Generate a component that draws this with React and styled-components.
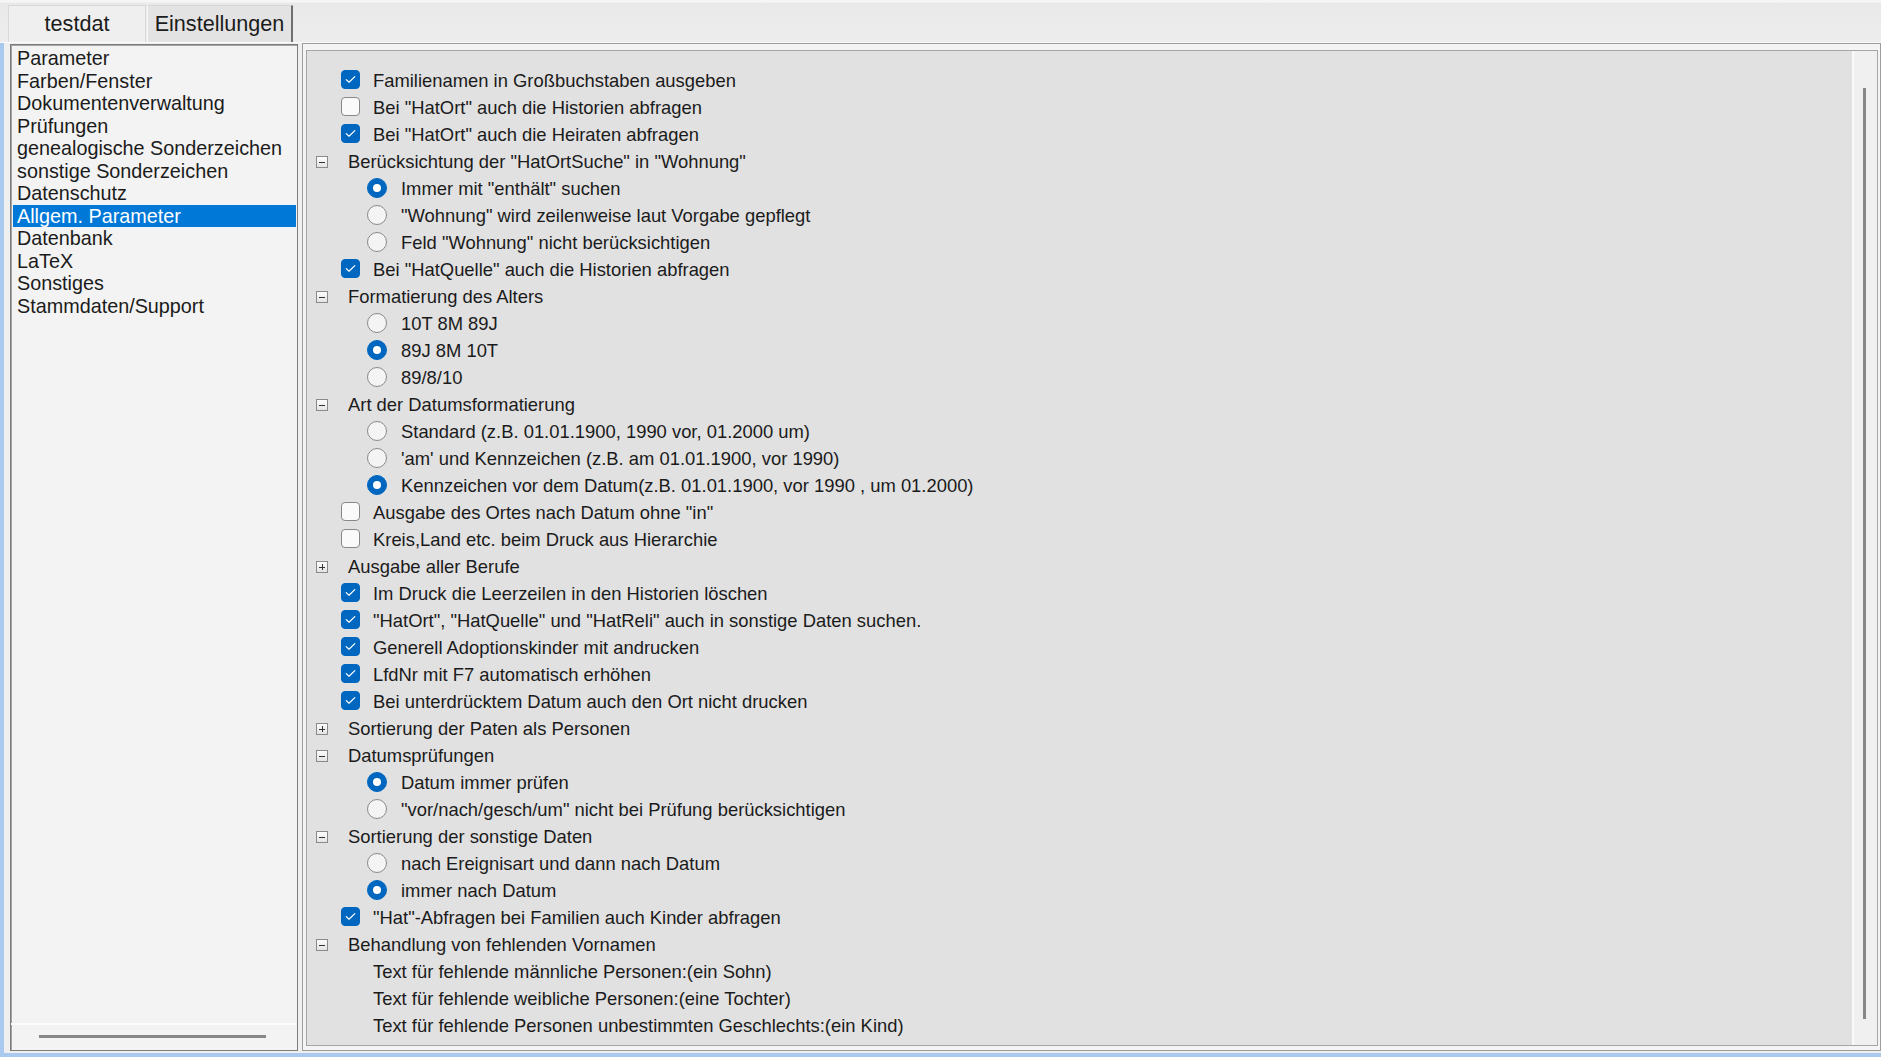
import React from 'react'
import styled, { createGlobalStyle } from 'styled-components'

const GlobalStyle = createGlobalStyle`
  html, body {
    margin: 0;
    padding: 0;
    background: #eeeeee;
    overflow: hidden;
  }
  * { box-sizing: border-box; }
`

const Window = styled.div`
  width: 1881px;
  height: 1057px;
  display: flex;
  flex-direction: column;
  background: #efefef;
  font-family: "Liberation Sans", Arial, sans-serif;
  color: #1b1b1b;
  border-bottom: 4px solid #a9c9ee;
`

const TabStrip = styled.div`
  height: 43px;
  flex: none;
  display: flex;
  align-items: flex-end;
  padding: 0 0 0 8px;
  background: linear-gradient(#f6f6f6 0, #f6f6f6 2px, #e9e9e9 3px, #ededed 100%);
  border-bottom: 1px solid #fafafa;
`

const Tab = styled.div`
  height: 37px;
  width: ${p => p.w}px;
  display: flex;
  align-items: center;
  justify-content: center;
  font-size: 21.6px;
  background: ${p => (p.active ? '#e3e3e3' : '#efefef')};
  border-top: 1px solid #d6d6d6;
  border-left: 1px solid ${p => (p.active ? '#f8f8f8' : '#d9d9d9')};
  border-right: ${p => (p.active ? '2px solid #6f6f6f' : '1px solid #d9d9d9')};
  margin-right: 1px;
`

const Main = styled.div`
  flex: 1;
  display: flex;
  border-left: 4px solid #a9c9ee;
  padding: 0 0 2px 6px;
  min-height: 0;
`

const ListPanel = styled.div`
  width: 288px;
  margin-top: 1px;
  display: flex;
  flex-direction: column;
  background: #f3f3f3;
  border: 1px solid #7c7c7c;
  box-shadow: inset 1px 1px 0 #a4a4a4;
`

const ListItems = styled.div`
  flex: 1;
  padding: 2px 1px 0 2px;
`

const ListItem = styled.div`
  height: 22.5px;
  line-height: 22.5px;
  font-size: 19.8px;
  padding-left: 4px;
  white-space: nowrap;
  background: ${p => (p.selected ? '#0078d7' : 'transparent')};
  color: ${p => (p.selected ? '#ffffff' : '#1b1b1b')};
`

const HScroll = styled.div`
  height: 27px;
  flex: none;
  border-top: 2px solid #fbfbfb;
  padding: 10px 0 0 28px;
`

const HThumb = styled.div`
  width: 227px;
  height: 3px;
  background: #878787;
`

const RightPanel = styled.div`
  flex: 1;
  margin-left: 4px;
  display: flex;
  border: 1px solid #9d9d9d;
  padding: 6px 2px 4px 3px;
  background: #f4f4f4;
`

const TreeBox = styled.div`
  flex: 1;
  display: flex;
  border: 1px solid #a6a6a6;
  background: #e1e1e1;
  min-width: 0;
`

const Tree = styled.div`
  flex: 1;
  padding-top: 16px;
  overflow: hidden;
`

const VScroll = styled.div`
  width: 25px;
  flex: none;
  background: #f0f0f0;
  border-left: 2px solid #fafafa;
  padding: 37px 0 26px 9px;
`

const VThumb = styled.div`
  width: 3px;
  height: 100%;
  background: #878787;
`

const indent = { group: 9, check: 34, radio: 60, text: 66 }
const gap = { group: 20, check: 13, radio: 14, text: 0 }

const Row = styled.div`
  height: 27px;
  display: flex;
  align-items: center;
  padding-left: ${p => indent[p.kind]}px;
  gap: ${p => gap[p.kind]}px;
  font-size: 18.4px;
  white-space: nowrap;
`

const Expander = styled.div`
  width: 12px;
  height: 12px;
  flex: none;
  border: 1px solid #8a8a8a;
  background: linear-gradient(#fdfdfd, #e4e4e4);
  position: relative;
  margin-top: 1px;
  &::before {
    content: '';
    position: absolute;
    left: 2px;
    top: 4.5px;
    width: 6px;
    height: 1px;
    background: #333333;
  }
  &::after {
    content: '';
    position: absolute;
    left: 4.5px;
    top: 2px;
    width: 1px;
    height: 6px;
    background: #333333;
    display: ${p => (p.open ? 'none' : 'block')};
  }
`

const Box = styled.div`
  width: 19px;
  height: 19px;
  flex: none;
  border-radius: 4px;
  display: flex;
  align-items: center;
  justify-content: center;
  background: ${p => (p.on ? '#0067c0' : '#fafafa')};
  border: 1px solid ${p => (p.on ? '#0067c0' : '#878787')};
  margin-top: -2px;
`

const Radio = styled.div`
  width: 20px;
  height: 20px;
  flex: none;
  border-radius: 50%;
  display: flex;
  align-items: center;
  justify-content: center;
  background: ${p => (p.on ? '#0067c0' : '#f4f4f4')};
  border: 1px solid ${p => (p.on ? '#0067c0' : '#8a8a8a')};
  margin-top: -2px;
  &::after {
    content: '';
    width: 8px;
    height: 8px;
    border-radius: 50%;
    background: #ffffff;
    display: ${p => (p.on ? 'block' : 'none')};
  }
`

const Label = styled.span`
  line-height: 27px;
`

const Check = () => (
  <svg width="11" height="9" viewBox="0 0 11 9">
    <path d="M1.2 4.6 L4 7.2 L9.8 1.6" fill="none" stroke="#ffffff" strokeWidth="1.2" strokeLinecap="round" strokeLinejoin="round" />
  </svg>
)

const categories = [
  'Parameter',
  'Farben/Fenster',
  'Dokumentenverwaltung',
  'Prüfungen',
  'genealogische Sonderzeichen',
  'sonstige Sonderzeichen',
  'Datenschutz',
  'Allgem. Parameter',
  'Datenbank',
  'LaTeX',
  'Sonstiges',
  'Stammdaten/Support'
]

const rows = [
  { kind: 'check', on: true, label: 'Familienamen in Großbuchstaben ausgeben' },
  { kind: 'check', on: false, label: 'Bei "HatOrt" auch die Historien abfragen' },
  { kind: 'check', on: true, label: 'Bei "HatOrt" auch die Heiraten abfragen' },
  { kind: 'group', on: true, label: 'Berücksichtung der "HatOrtSuche" in "Wohnung"' },
  { kind: 'radio', on: true, label: 'Immer mit "enthält" suchen' },
  { kind: 'radio', on: false, label: '"Wohnung" wird zeilenweise laut Vorgabe gepflegt' },
  { kind: 'radio', on: false, label: 'Feld "Wohnung" nicht berücksichtigen' },
  { kind: 'check', on: true, label: 'Bei "HatQuelle" auch die Historien abfragen' },
  { kind: 'group', on: true, label: 'Formatierung des Alters' },
  { kind: 'radio', on: false, label: '10T 8M 89J' },
  { kind: 'radio', on: true, label: '89J 8M 10T' },
  { kind: 'radio', on: false, label: '89/8/10' },
  { kind: 'group', on: true, label: 'Art der Datumsformatierung' },
  { kind: 'radio', on: false, label: 'Standard (z.B. 01.01.1900, 1990 vor, 01.2000 um)' },
  { kind: 'radio', on: false, label: "'am' und Kennzeichen (z.B. am 01.01.1900, vor 1990)" },
  { kind: 'radio', on: true, label: 'Kennzeichen vor dem Datum(z.B. 01.01.1900, vor 1990 , um 01.2000)' },
  { kind: 'check', on: false, label: 'Ausgabe des Ortes nach Datum ohne "in"' },
  { kind: 'check', on: false, label: 'Kreis,Land etc. beim Druck aus Hierarchie' },
  { kind: 'group', on: false, label: 'Ausgabe aller Berufe' },
  { kind: 'check', on: true, label: 'Im Druck die Leerzeilen in den Historien löschen' },
  { kind: 'check', on: true, label: '"HatOrt", "HatQuelle" und "HatReli" auch in sonstige Daten suchen.' },
  { kind: 'check', on: true, label: 'Generell Adoptionskinder mit andrucken' },
  { kind: 'check', on: true, label: 'LfdNr mit F7 automatisch erhöhen' },
  { kind: 'check', on: true, label: 'Bei unterdrücktem Datum auch den Ort nicht drucken' },
  { kind: 'group', on: false, label: 'Sortierung der Paten als Personen' },
  { kind: 'group', on: true, label: 'Datumsprüfungen' },
  { kind: 'radio', on: true, label: 'Datum immer prüfen' },
  { kind: 'radio', on: false, label: '"vor/nach/gesch/um" nicht bei Prüfung berücksichtigen' },
  { kind: 'group', on: true, label: 'Sortierung der sonstige Daten' },
  { kind: 'radio', on: false, label: 'nach Ereignisart und dann nach Datum' },
  { kind: 'radio', on: true, label: 'immer nach Datum' },
  { kind: 'check', on: true, label: '"Hat"-Abfragen bei Familien auch Kinder abfragen' },
  { kind: 'group', on: true, label: 'Behandlung von fehlenden Vornamen' },
  { kind: 'text', label: 'Text für fehlende männliche Personen:(ein Sohn)' },
  { kind: 'text', label: 'Text für fehlende weibliche Personen:(eine Tochter)' },
  { kind: 'text', label: 'Text für fehlende Personen unbestimmten Geschlechts:(ein Kind)' }
]

const Control = ({ kind, on }) => {
  if (kind === 'group') return <Expander open={on} />
  if (kind === 'check') return <Box on={on}>{on && <Check />}</Box>
  if (kind === 'radio') return <Radio on={on} />
  return null
}

export default function App() {
  return (
    <Window>
      <GlobalStyle />
      <TabStrip>
        <Tab w={138}>testdat</Tab>
        <Tab w={146} active>Einstellungen</Tab>
      </TabStrip>
      <Main>
        <ListPanel>
          <ListItems>
            {categories.map(c => (
              <ListItem key={c} selected={c === 'Allgem. Parameter'}>{c}</ListItem>
            ))}
          </ListItems>
          <HScroll>
            <HThumb />
          </HScroll>
        </ListPanel>
        <RightPanel>
          <TreeBox>
            <Tree>
              {rows.map((r, i) => (
                <Row key={i} kind={r.kind}>
                  <Control kind={r.kind} on={r.on} />
                  <Label>{r.label}</Label>
                </Row>
              ))}
            </Tree>
            <VScroll>
              <VThumb />
            </VScroll>
          </TreeBox>
        </RightPanel>
      </Main>
    </Window>
  )
}
